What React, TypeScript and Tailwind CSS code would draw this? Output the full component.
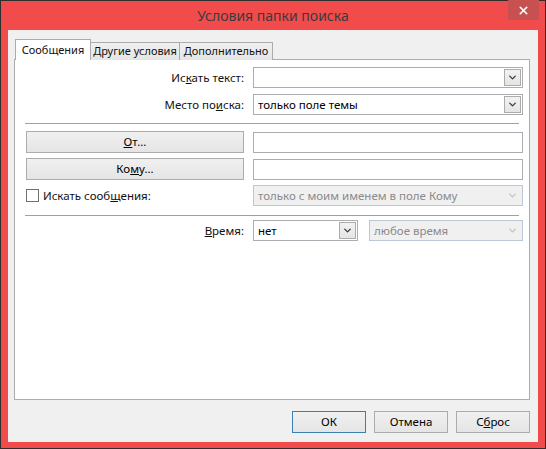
import { ChevronDown, X } from "lucide-react";

const font = { fontFamily: '"Noto Sans", "Open Sans", sans-serif' };

function DropBtn({ disabled }: { disabled?: boolean }) {
  return (
    <div
      className={`w-[17px] h-[17px] flex items-center justify-center border ${
        disabled
          ? "border-transparent text-[#c4c4c4]"
          : "border-[#acacac] bg-gradient-to-b from-[#f2f2f2] to-[#e5e5e5] text-[#3c3c3c]"
      }`}
    >
      <ChevronDown size={11} strokeWidth={3} />
    </div>
  );
}

function Combo({
  value,
  width,
  disabled,
}: {
  value?: string;
  width: string;
  disabled?: boolean;
}) {
  return (
    <div
      className={`${width} h-[21px] flex items-center justify-between pl-[4px] pr-[1px] border ${
        disabled
          ? "border-[#bcc7d8] bg-[#f0f0f0] text-[#8a8a8a]"
          : "border-[#abadb3] bg-white text-black"
      }`}
    >
      <span className="leading-none whitespace-nowrap">{value}</span>
      <DropBtn disabled={disabled} />
    </div>
  );
}

function Field() {
  return <div className="w-[270px] h-[21px] border border-[#abadb3] bg-white" />;
}

function PushBtn({
  children,
  className = "",
}: {
  children: React.ReactNode;
  className?: string;
}) {
  return (
    <button
      className={`flex items-center justify-center h-[22px] border bg-gradient-to-b from-[#f0f0f0] to-[#e5e5e5] text-black text-[11.5px] ${className}`}
    >
      {children}
    </button>
  );
}

export default function App() {
  return (
    <div
      className="w-[546px] h-[449px] border border-[#2e2e2e] bg-[#f24b4c] flex flex-col text-[11.5px] text-[#111]"
      style={font}
    >
      {/* Title bar */}
      <div className="relative h-[29px] flex items-center justify-center">
        <span className="text-[14px] text-[#3b3b3b]">Условия папки поиска</span>
        <div className="absolute right-[6px] top-[-1px] w-[31px] h-[20px] bg-[#c75050] flex items-center justify-center text-white">
          <X size={13} strokeWidth={3} />
        </div>
      </div>

      {/* Client */}
      <div className="flex-1 mx-[7px] mb-[6px] bg-[#f0f0f0] flex flex-col pl-[6px] pr-[8px] pt-[9px]">
        {/* Tabs */}
        <div className="flex items-end h-[21px] relative z-10 whitespace-nowrap text-[11px]">
          <div className="w-[76px] h-[21px] bg-white border border-b-0 border-[#acacac] flex items-center justify-center ml-[1px] -mr-[1px]">
            Сообщения
          </div>
          <div className="w-[90px] h-[18px] bg-gradient-to-b from-[#f0f0f0] to-[#e5e5e5] border border-b-0 border-[#acacac] flex items-center justify-center">
            Другие условия
          </div>
          <div className="w-[93px] h-[18px] bg-gradient-to-b from-[#f0f0f0] to-[#e5e5e5] border border-b-0 border-l-0 border-[#acacac] flex items-center justify-center">
            Дополнительно
          </div>
        </div>

        {/* Panel */}
        <div className="h-[341px] -mt-[1px] bg-white border border-[#acacac] pl-[10px] pt-[7px]">
          <div className="flex items-center">
            <div className="w-[219px] text-right">
              Ис<u>к</u>ать текст:
            </div>
            <div className="ml-[9px]">
              <Combo width="w-[270px]" />
            </div>
          </div>

          <div className="flex items-center mt-[6px]">
            <div className="w-[219px] text-right">
              Место по<u>и</u>ска:
            </div>
            <div className="ml-[9px]">
              <Combo width="w-[270px]" value="только поле темы" />
            </div>
          </div>

          <div className="h-[1px] w-[494px] bg-[#a0a0a0] mt-[8px]" />

          <div className="flex items-center mt-[7px]">
            <PushBtn className="w-[218px] ml-[1px] border-[#acacac]">
              <u>О</u>т...
            </PushBtn>
            <div className="ml-[9px]">
              <Field />
            </div>
          </div>

          <div className="flex items-center mt-[5px]">
            <PushBtn className="w-[218px] ml-[1px] border-[#acacac]">
              Ко<u>м</u>у...
            </PushBtn>
            <div className="ml-[9px]">
              <Field />
            </div>
          </div>

          <div className="flex items-center mt-[5px]">
            <div className="w-[219px] flex items-center pl-[1px]">
              <div className="w-[13px] h-[13px] border border-[#707070] bg-white" />
              <span className="ml-[4px]">
                Искать сооб<u>щ</u>ения:
              </span>
            </div>
            <div className="ml-[9px]">
              <Combo
                width="w-[270px]"
                value="только с моим именем в поле Кому"
                disabled
              />
            </div>
          </div>

          <div className="h-[1px] w-[494px] bg-[#a0a0a0] mt-[9px]" />

          <div className="flex items-center mt-[4px]">
            <div className="w-[219px] text-right">
              <u>В</u>ремя:
            </div>
            <div className="ml-[9px] flex items-center gap-[11px]">
              <Combo width="w-[105px]" value="нет" />
              <Combo width="w-[154px]" value="любое время" disabled />
            </div>
          </div>
        </div>

        {/* Bottom buttons */}
        <div className="flex justify-end gap-[8px] mt-[11px]">
          <PushBtn className="w-[74px] border-[#3c7fb1]">ОК</PushBtn>
          <PushBtn className="w-[74px] border-[#acacac]">Отмена</PushBtn>
          <PushBtn className="w-[74px] border-[#acacac]">
            С<u>б</u>рос
          </PushBtn>
        </div>
      </div>
    </div>
  );
}
